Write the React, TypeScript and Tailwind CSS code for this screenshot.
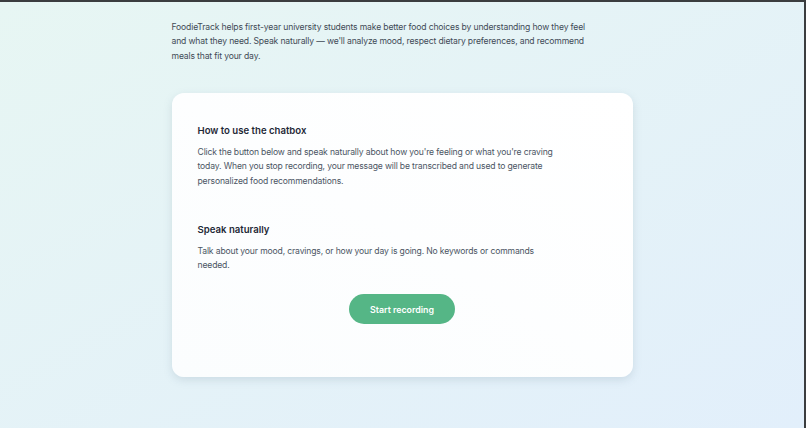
export default function App() {
  return (
    <div
      className="min-h-[428px] w-full border-t-2 border-r-2 border-[#3b3d3f] bg-gradient-to-br from-[#e7f6f3] to-[#e2effb] text-[#374151]"
      style={{ fontFamily: "Inter, 'Noto Sans', sans-serif" }}
    >
      <div className="mx-auto flex w-[461px] flex-col pt-[18px]">
        <p className="w-[430px] text-[8.6px] leading-[14.4px] tracking-[-0.15px] text-[#3f4a56]">
          FoodieTrack helps first-year university students make better food choices by understanding how they feel
          and what they need. Speak naturally — we&apos;ll analyze mood, respect dietary preferences, and recommend
          meals that fit your day.
        </p>

        <div className="mt-[30px] flex h-[284px] flex-col rounded-[12px] bg-gradient-to-tr from-[#fbfdfe] to-white px-[26px] pt-[31px] shadow-[0_3px_8px_rgba(120,140,160,0.22)]">
          <h2 className="text-[9.6px] font-semibold leading-[14px] text-[#1f2937]">How to use the chatbox</h2>
          <p className="mt-[7px] w-[368px] text-[8.6px] leading-[14.2px] tracking-[-0.15px] text-[#4b5563]">
            Click the button below and speak naturally about how you&apos;re feeling or what you&apos;re craving
            today. When you stop recording, your message will be transcribed and used to generate personalized food
            recommendations.
          </p>

          <h2 className="mt-[35px] text-[9.6px] font-semibold leading-[14px] text-[#1f2937]">Speak naturally</h2>
          <p className="mt-[7px] w-[368px] text-[8.6px] leading-[14.2px] tracking-[-0.15px] text-[#4b5563]">
            Talk about your mood, cravings, or how your day is going. No keywords or commands needed.
          </p>

          <div className="mt-[22px] flex justify-center">
            <button className="h-[30px] w-[106px] rounded-full bg-[#55b686] text-[8.8px] font-semibold text-white">
              Start recording
            </button>
          </div>
        </div>
      </div>
    </div>
  );
}
